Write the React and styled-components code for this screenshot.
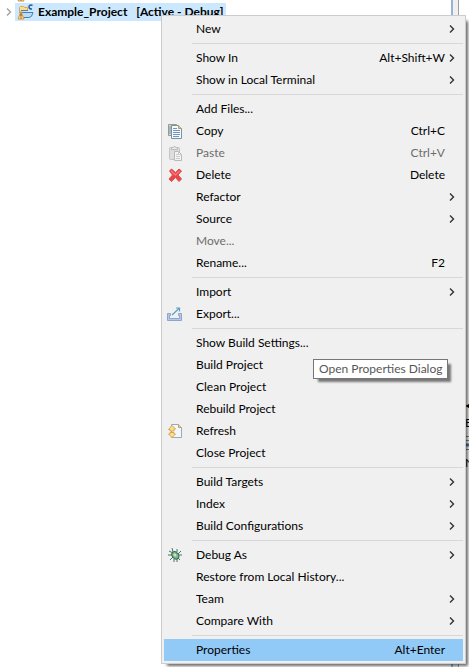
import React from "react";
import styled, { createGlobalStyle, css } from "styled-components";

const Global = createGlobalStyle`
  * { box-sizing: border-box; }
  body { margin: 0; background: #fff; color: #000; font: 12px/22px Lato, "Open Sans", sans-serif; overflow: hidden; }
  button { font: inherit; color: inherit; }
`;
const Page = styled.div`position: relative; display: grid; grid-template-columns: 1fr 18px; height: 100vh; overflow: hidden;`;
const Tree = styled.ul`list-style: none; margin: 0; padding: 0; min-width: 0; overflow: hidden;`;
const TreeRow = styled.li`
  display: flex; align-items: center; white-space: pre; font-weight: ${p => (p.$bold ? 700 : 400)};
  height: 18px; gap: 3px; padding-left: 6px; line-height: 16px;
  ${p => p.$clipped && css`height: 3px; padding-left: 15px; align-items: flex-end; overflow: hidden;`}
`;
const TreeItem = styled.span`
  display: flex; align-items: center; gap: 4px; height: 18px; padding: 0 2px;
  background: ${p => (p.$selected ? "#cce8ff" : "transparent")};
`;
const Config = styled.span`margin-left: 5px;`;
const Editor = styled.div`
  display: flex; flex-direction: column; border-left: 2px solid #99b4d1; overflow: hidden;
  background: linear-gradient(90deg, #f0f0f0 5px, #a0a0a0 5px, #a0a0a0 6px, #fff 6px);
`;
const Fragments = styled.div`
  display: flex; flex-direction: column; align-items: flex-start; gap: 6px;
  margin: 399px 0 0 12px; line-height: 12px;
`;
const Menu = styled.div`
  position: absolute; top: 15px; left: 161px; right: 3px; padding: 2px;
  border: 1px solid #ccc; background: #f0f0f0; box-shadow: 4px 4px 3px -2px rgba(0,0,0,.6);
`;
const Group = styled.div`
  & + &::before { content: ""; display: block; height: 1px; margin: 3px 0 3px 28px; background: #d7d7d7; }
`;
const Item = styled.button`
  display: grid; grid-template-columns: 32px 1fr auto 18px; align-items: center;
  width: 100%; height: 22px; padding: 0; border: 0; text-align: left; white-space: nowrap;
  background: ${p => (p.$active ? "#91c9f7" : "transparent")};
  color: ${p => (p.disabled ? "#6d6d6d" : "#000")};
`;
const IconCell = styled.span`display: flex; padding-left: 3px;`;
const ArrowCell = styled.span`display: flex; padding-left: 4px;`;
const Tooltip = styled.div`
  position: absolute; top: 359px; left: 313px; padding: 0 5px; height: 20px; line-height: 18px;
  border: 1px solid #767676; background: #fff; color: #575757; white-space: nowrap;
  box-shadow: 4px 4px 2px -1px rgba(0,0,0,.5);
`;

const Svg = ({ children, w = 16 }) => (
  <svg width={w} height="16" viewBox={`0 0 ${w} 16`} fill="none" aria-hidden="true">{children}</svg>
);
const Chevron = ({ color = "#333" }) => (
  <svg width="6" height="10" viewBox="0 0 6 10" fill="none" aria-hidden="true">
    <path d="M1 1.5 4.5 5 1 8.5" stroke={color} strokeWidth="1.4" />
  </svg>
);
const icons = {
  copy: <Svg>
    <path d="M1.500 1.500h8v11h-8z" fill="#c6dcec" stroke="#a39a72" />
    <path d="M2 4h3M2 6h3M2 8h3M2 10h3" stroke="#7294b5" />
    <path d="M4.500 2.500h7l3 3v10h-10z" fill="#f4f9fd" stroke="#7892a5" />
    <path d="M11.500 2.500v3h3" fill="#e9c878" stroke="#b99a56" />
    <path d="M6 5.500h4M6 7.500h7M6 9.500h7M6 11.500h7M6 13.500h6" stroke="#7594bd" />
  </Svg>,
  paste: <Svg>
    <rect x="2.500" y="2.500" width="10" height="12" rx="1" fill="#dedede" stroke="#c4c4c4" />
    <path d="M4.500 4.500v-2h2L7.500 1l1 1.500h2v2z" fill="#eee" stroke="#b9b9b9" />
    <path d="M7.500 6.500h4l3 3v6h-7z" fill="#f4f4f4" stroke="#b9b9b9" />
    <path d="M11.500 6.500v3h3M9 9.500h2M9 11.500h4M9 13.500h4" stroke="#cbcbcb" />
  </Svg>,
  remove: <Svg>
    <path d="m2.500 4 2-2L8.500 5.500 12 2l2.500 2L11 8l3.500 4-2.500 2.500-3.500-4-4 4L2 12l3.500-4z" fill="#ed4547" stroke="#d94d4e" strokeLinejoin="round" />
    <path d="m4 4 4.500 4 4-4" stroke="#f8797b" strokeWidth="1.500" />
  </Svg>,
  exportIt: <Svg>
    <path d="M.5 7.500h3v2h-1v3h10v-3h-1v-2h3v7H.5z" fill="#b3c9e7" stroke="#8ea4ca" />
    <path d="m5 9 7-6.500M9 2h3.500v3.500" stroke="#5c9fc4" strokeWidth="1.200" />
  </Svg>,
  refresh: <Svg>
    <path d="M4.500 1.500h7l3 3v10h-10z" fill="#f2f7fc" stroke="#9aa8b8" />
    <path d="M11.500 1.500v3h3" fill="#ebcd82" stroke="#c5a362" />
    <path d="M3 8V6.500H1.500L5 2.500 8.500 6H7v2zM3 9.500h4V11h1.500L5 14.500 1.500 11H3z" fill="#fae18c" stroke="#d7a64e" />
  </Svg>,
  debug: <Svg>
    <path d="M5 1l1 4M10 2v3M2 4l4 2M1 8h4M3 13l3-3M14 4l-3 3M15 8h-4M13 13l-3-3M7 15v-3M10 15v-3" stroke="#467569" />
    <ellipse cx="8" cy="8.500" rx="3" ry="4" transform="rotate(-40 8 8)" fill="#7eb78c" stroke="#326958" />
    <path d="m7 7 2 2" stroke="#d1ecb8" strokeWidth="2" />
  </Svg>,
};
const ProjectIcon = () => (
  <Svg w={17}>
    <path d="M2.500 9V3.500l1-1h3l1 1h3V7" fill="#f8dc94" stroke="#d4a95c" />
    <path d="M4 6.500h7M3 8.500h13q-1 5-4 5H6z" fill="#c0dcf4" stroke="#477fb5" />
    <path d="M15.500 1.500c-4-2-5 4-.5 3.500" stroke="#255e94" strokeWidth="1.500" />
    <path d="m4 7.500 3 7.500H1z" fill="#ffd68a" stroke="#d39a45" />
    <path d="M4 9.500v3M4 13.500v1" stroke="#633b08" />
  </Svg>
);

const groups = [
  [{ t: "New", sub: true }],
  [{ t: "Show In", key: "Alt+Shift+W", sub: true }, { t: "Show in Local Terminal", sub: true }],
  [{ t: "Add Files..." }, { t: "Copy", key: "Ctrl+C", icon: "copy" }, { t: "Paste", key: "Ctrl+V", icon: "paste", off: true },
    { t: "Delete", key: "Delete", icon: "remove" }, { t: "Refactor", sub: true }, { t: "Source", sub: true },
    { t: "Move...", off: true }, { t: "Rename...", key: "F2" }],
  [{ t: "Import", sub: true }, { t: "Export...", icon: "exportIt" }],
  [{ t: "Show Build Settings..." }, { t: "Build Project" }, { t: "Clean Project" }, { t: "Rebuild Project" },
    { t: "Refresh", icon: "refresh" }, { t: "Close Project" }],
  [{ t: "Build Targets", sub: true }, { t: "Index", sub: true }, { t: "Build Configurations", sub: true }],
  [{ t: "Debug As", sub: true, icon: "debug" }, { t: "Restore from Local History..." }, { t: "Team", sub: true }, { t: "Compare With", sub: true }],
  [{ t: "Properties", key: "Alt+Enter", active: true }],
];

export default function App() {
  return (
    <Page>
      <Global />
      <Tree>
        <TreeRow $clipped>
          <TreeItem><ProjectIcon />Example_Project</TreeItem>
        </TreeRow>
        <TreeRow $bold>
          <Chevron color="#a0a0a0" />
          <TreeItem $selected><ProjectIcon />Example_Project<Config>[Active - Debug]</Config></TreeItem>
        </TreeRow>
      </Tree>
      <Editor>
        <Fragments>
          <span>◂</span>
          <span>E</span>
          <Svg w={12}><path d="M0 1.500h12M0 5.500h12M0 14.500h12" stroke="#888" /><path d="M0 10h12" stroke="#4a78b8" strokeWidth="3" /></Svg>
          <span>N</span>
        </Fragments>
      </Editor>
      <Menu role="menu">
        {groups.map((items, i) => (
          <Group key={i} role="group">
            {items.map(m => (
              <Item key={m.t} role="menuitem" disabled={m.off} $active={m.active} aria-haspopup={m.sub ? "menu" : undefined}>
                <IconCell>{icons[m.icon]}</IconCell>
                <span>{m.t}</span>
                <span>{m.key}</span>
                <ArrowCell>{m.sub && <Chevron />}</ArrowCell>
              </Item>
            ))}
          </Group>
        ))}
      </Menu>
      <Tooltip role="tooltip">Open Properties Dialog</Tooltip>
    </Page>
  );
}
